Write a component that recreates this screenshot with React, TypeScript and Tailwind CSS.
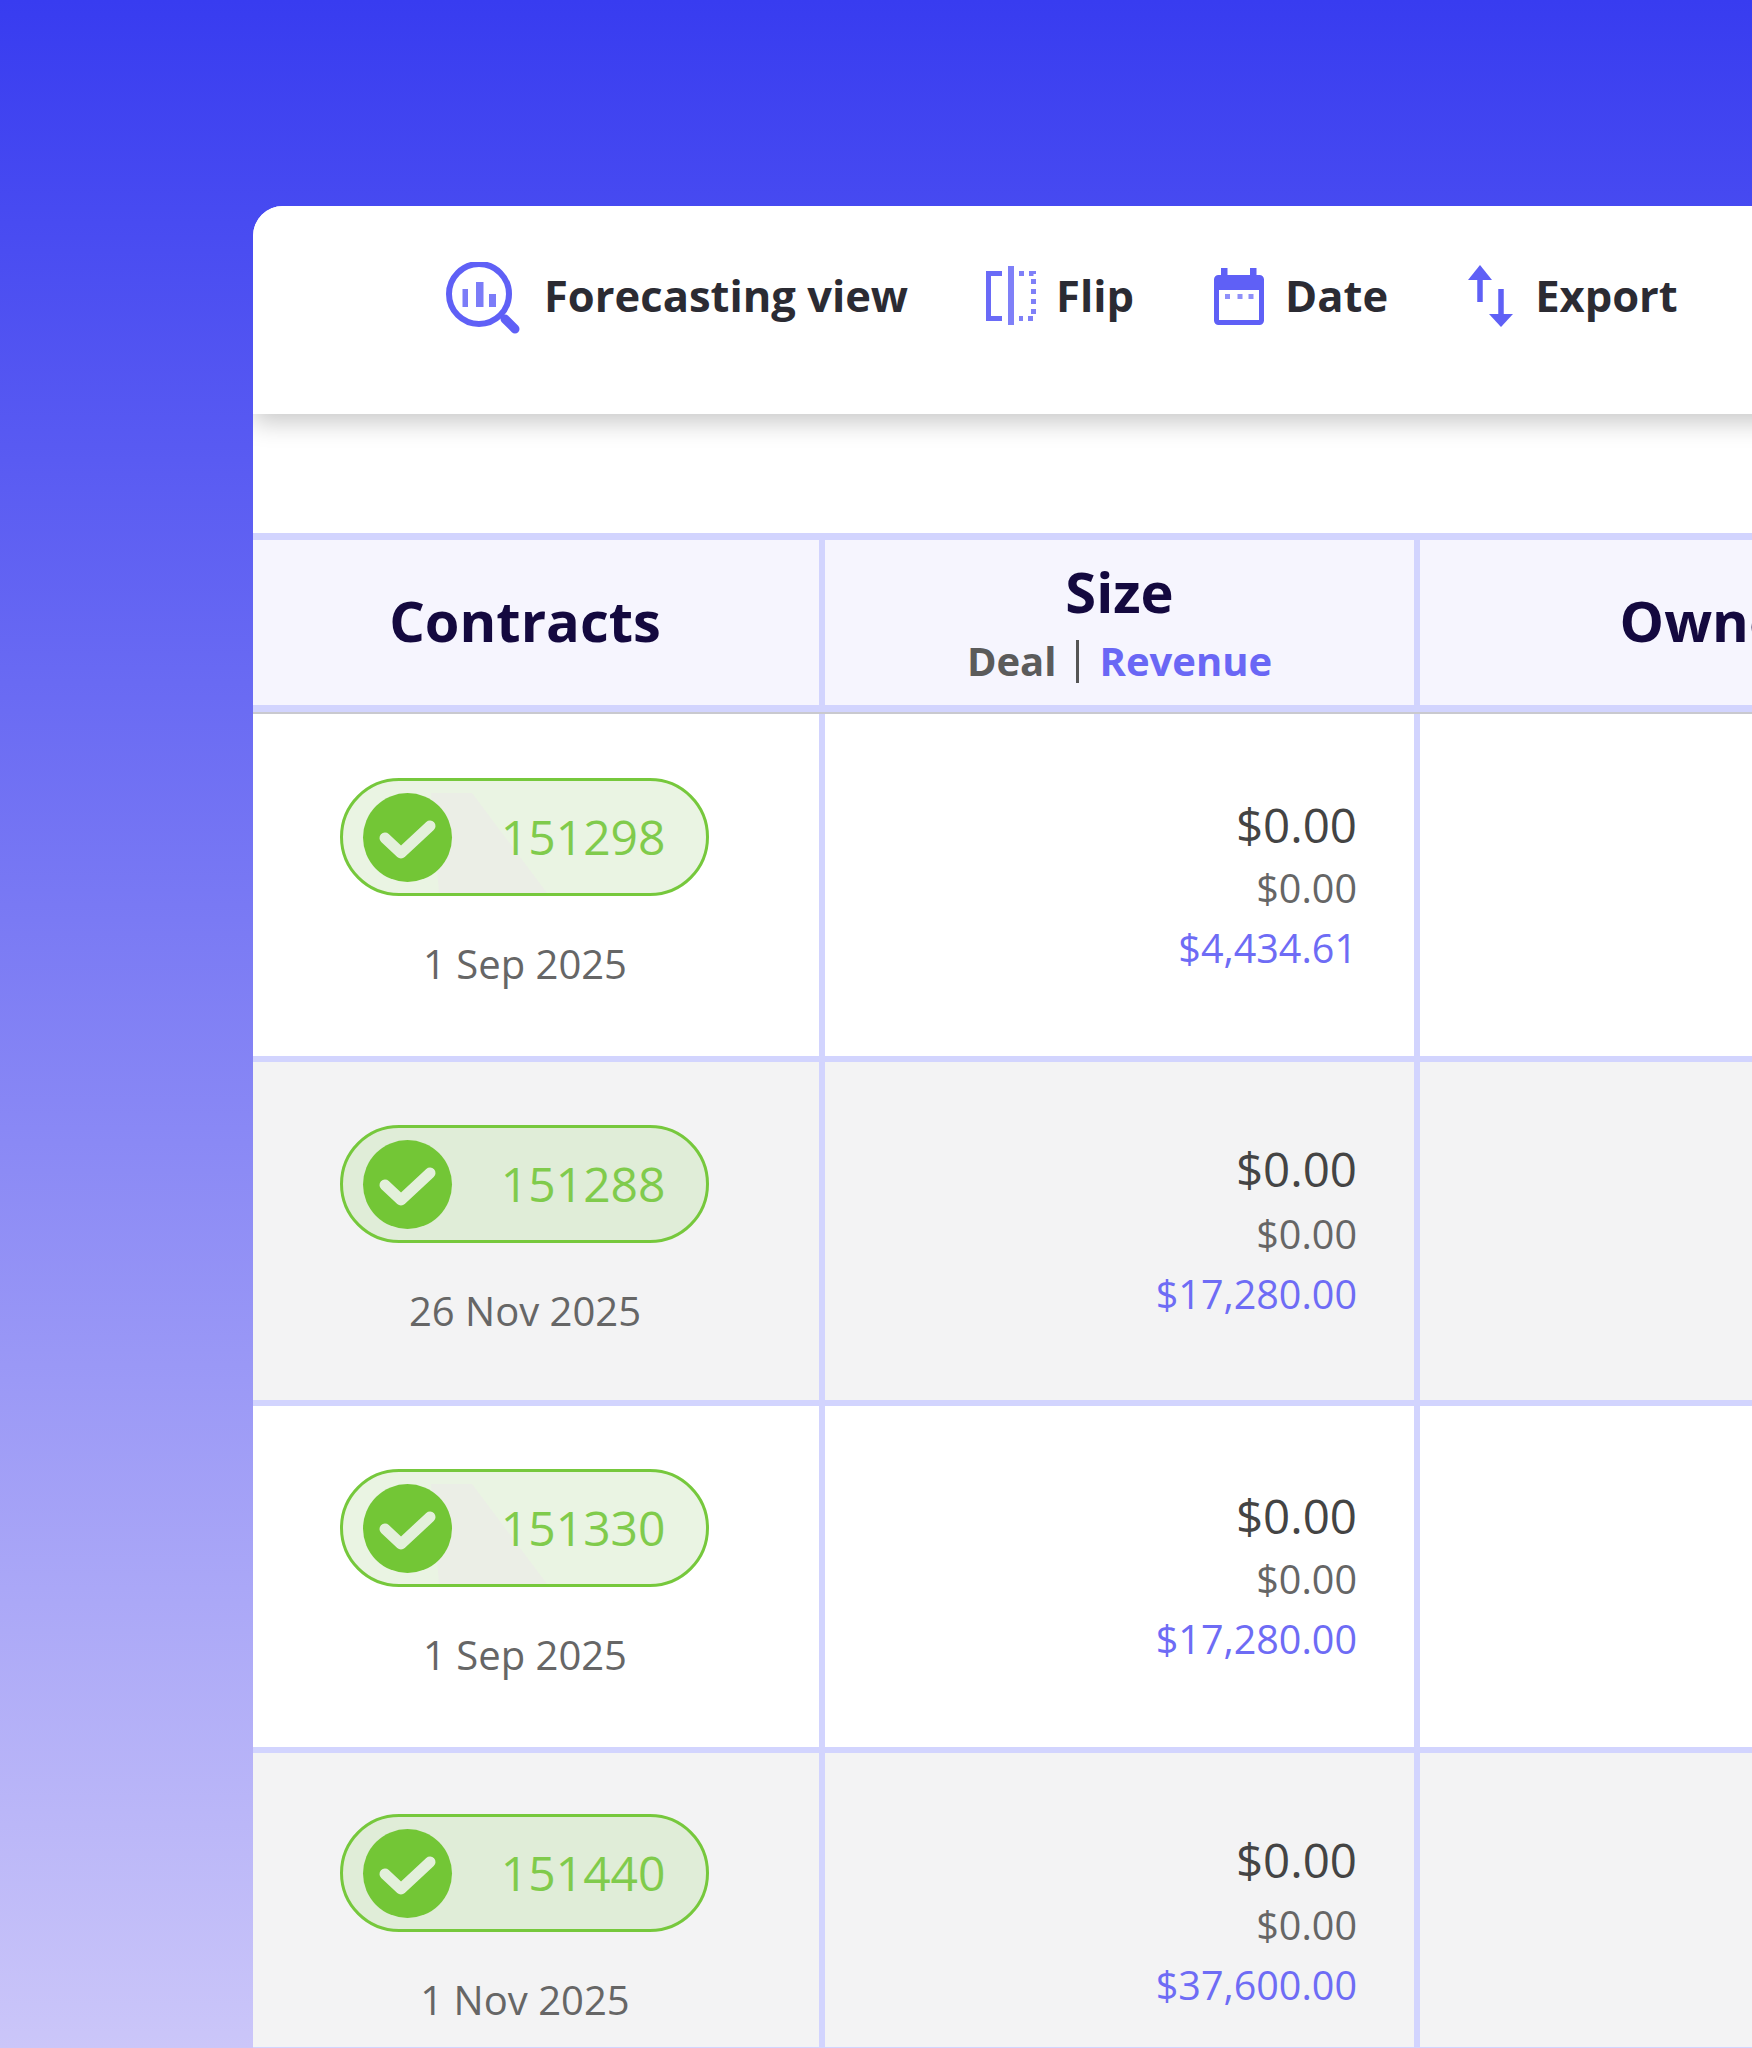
import React from "react";

const rows = [
  { id: "151298", date: "1 Sep 2025", deal: "$0.00", sub: "$0.00", revenue: "$4,434.61", height: "h-[348px]", shaded: false, pillTop: "pt-[64px]", sizeTop: "pt-[81px]", subGap: "mt-[3px]" },
  { id: "151288", date: "26 Nov 2025", deal: "$0.00", sub: "$0.00", revenue: "$17,280.00", height: "h-[344px]", shaded: true, pillTop: "pt-[63px]", sizeTop: "pt-[77px]", subGap: "mt-[5px]" },
  { id: "151330", date: "1 Sep 2025", deal: "$0.00", sub: "$0.00", revenue: "$17,280.00", height: "h-[347px]", shaded: false, pillTop: "pt-[63px]", sizeTop: "pt-[80px]", subGap: "mt-[3px]" },
  { id: "151440", date: "1 Nov 2025", deal: "$0.00", sub: "$0.00", revenue: "$37,600.00", height: "h-[300px]", shaded: true, pillTop: "pt-[61px]", sizeTop: "pt-[77px]", subGap: "mt-[5px]" },
];

const ForecastIcon = () => (
  <svg width="74" height="72" viewBox="0 0 74 72" fill="none">
    <circle cx="33" cy="32" r="30" stroke="#5f60f6" strokeWidth="6" />
    <rect x="16.5" y="27" width="5.5" height="18" fill="#7b7cf8" />
    <rect x="30" y="20" width="7.5" height="25" fill="#7b7cf8" />
    <rect x="43" y="32" width="7" height="13" fill="#7b7cf8" />
    <path d="M59 57L69 67" stroke="#5f60f6" strokeWidth="9" strokeLinecap="round" />
  </svg>
);

const FlipIcon = () => (
  <svg width="54" height="64" viewBox="0 0 54 64" fill="none">
    <path d="M18 9.5H4.5V54.5H18" stroke="#6a6bf7" strokeWidth="5" />
    <path d="M27 2V61" stroke="#7f80f8" strokeWidth="6" />
    <path d="M35 9.5H49.5V54.5H35" stroke="#7f80f8" strokeWidth="5" strokeDasharray="5 5" />
  </svg>
);

const CalendarIcon = () => (
  <svg width="50" height="57" viewBox="0 0 50 57" fill="none">
    <rect x="7" y="0" width="6.5" height="12" fill="#5f60f6" />
    <rect x="36" y="0" width="6.5" height="12" fill="#5f60f6" />
    <rect x="2.5" y="9.5" width="45" height="45" rx="2" stroke="#5f60f6" strokeWidth="5" />
    <rect x="2" y="8" width="46" height="14" fill="#5f60f6" />
    <rect x="11" y="26" width="5" height="5" fill="#8f90f9" />
    <rect x="23.5" y="26" width="5" height="5" fill="#8f90f9" />
    <rect x="34.5" y="26" width="5" height="5" fill="#8f90f9" />
  </svg>
);

const ExportIcon = () => (
  <svg width="48" height="64" viewBox="0 0 48 64" fill="none">
    <path d="M13 1L1 16H25Z" fill="#5f60f6" />
    <path d="M13 14V38" stroke="#5f60f6" strokeWidth="5.5" />
    <path d="M34 25V52" stroke="#5f60f6" strokeWidth="5.5" />
    <path d="M34 63L22 50H46Z" fill="#5f60f6" />
  </svg>
);

const StatusPill = ({ id, shaded }: { id: string; shaded: boolean }) => (
  <div
    className={`relative flex h-[118px] w-[369px] items-center justify-between overflow-hidden rounded-full border-[3px] border-[#76c83c] pl-[20px] pr-[40px] ${
      shaded ? "bg-[#e0edd8]" : "bg-[#eaf4e3]"
    }`}
  >
    {!shaded && (
      <svg className="absolute left-0 top-0" width="363" height="112" viewBox="0 0 363 112">
        <polygon points="88,12 129,12 204,112 96,112" fill="#ebeee6" />
      </svg>
    )}
    <div className="relative h-[89px] w-[89px] rounded-full bg-[#73c636]">
      <svg width="89" height="89" viewBox="0 0 89 89" fill="none">
        <path d="M22 45L38 60L67 33" stroke="#e3f0db" strokeWidth="11" strokeLinecap="round" strokeLinejoin="round" />
      </svg>
    </div>
    <span className="relative mb-[1px] text-[48px] leading-none text-[#80cb4c]">{id}</span>
  </div>
);

export default function App() {
  return (
    <div className="h-[2048px] w-[1752px] overflow-hidden bg-linear-to-b/srgb from-[#383cf0] to-[#cbc6f9] pl-[253px] pt-[206px] font-['Open_Sans',sans-serif]">
      <div className="w-[1741px] overflow-hidden rounded-tl-[30px] bg-white">
        <div className="relative flex h-[208px] items-center bg-white pb-[24px] pl-[193px] text-[43.5px] font-bold text-[#2b2b33] shadow-[0_8px_24px_rgba(0,0,0,0.22)]">
          <ForecastIcon />
          <span className="mb-[4px] ml-[24px]">Forecasting view</span>
          <span className="mb-[4px] ml-[76px]"><FlipIcon /></span>
          <span className="mb-[4px] ml-[18px]">Flip</span>
          <span className="mb-[4px] ml-[80px]"><CalendarIcon /></span>
          <span className="mb-[4px] ml-[21px]">Date</span>
          <span className="mb-[4px] ml-[79px]"><ExportIcon /></span>
          <span className="mb-[4px] ml-[20px]">Export</span>
        </div>

        <div className="mt-[119px] border-t-[7px] border-[#d2d4fe]">
          <div className="flex h-[172px] border-b-[7px] border-[#d2d4fe] bg-[#f6f5fe] text-[#14093f]">
            <div className="flex w-[572px] items-center justify-center border-r-[6px] border-[#d2d4fe] pb-[5px] pr-[22px] text-[56px] font-bold">
              Contracts
            </div>
            <div className="flex w-[595px] flex-col items-center border-r-[6px] border-[#d2d4fe] pt-[16px]">
              <div className="text-[56px] font-bold leading-[70px]">Size</div>
              <div className="mt-[13px] flex items-center text-[40px] font-bold leading-[44px]">
                <span className="text-[#5b5b5b]">Deal</span>
                <span className="mx-[20px] h-[43px] w-[3px] bg-[#555555]" />
                <span className="text-[#6a67f5]">Revenue</span>
              </div>
            </div>
            <div className="flex w-[574px] items-center justify-center pb-[5px] pl-[13px] text-[56px] font-bold">Owner</div>
          </div>
          <div className="h-[2px] bg-[#c9c9cf]" />

          {rows.map((row) => (
            <div
              key={row.id}
              className={`flex border-b-[6px] border-[#d2d4fe] ${row.height} ${row.shaded ? "bg-[#f3f3f4]" : "bg-white"}`}
            >
              <div className={`flex w-[572px] flex-col items-center border-r-[6px] border-[#d2d4fe] pr-[24px] ${row.pillTop}`}>
                <StatusPill id={row.id} shaded={row.shaded} />
                <div className="mt-[41px] pl-[2px] text-[40px] leading-[54px] text-[#666666]">{row.date}</div>
              </div>
              <div className={`flex w-[595px] flex-col items-end border-r-[6px] border-[#d2d4fe] pr-[57px] leading-[60px] ${row.sizeTop}`}>
                <div className="text-[47.5px] text-[#444444]">{row.deal}</div>
                <div className={`text-[39.5px] text-[#666666] ${row.subGap}`}>{row.sub}</div>
                <div className="text-[39.5px] text-[#6e6cf5]">{row.revenue}</div>
              </div>
              <div className="w-[574px]" />
            </div>
          ))}
        </div>
      </div>
    </div>
  );
}
